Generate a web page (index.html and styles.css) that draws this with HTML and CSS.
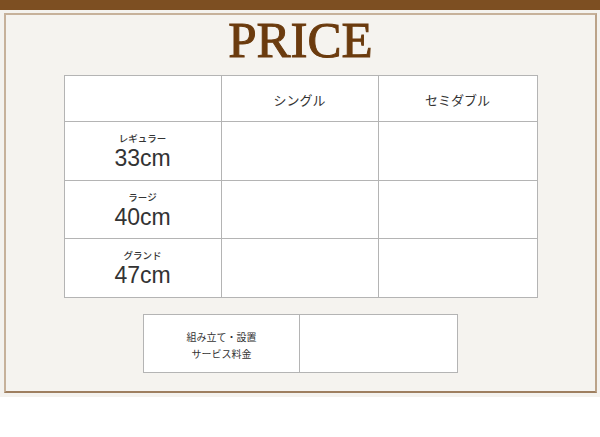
FILE: index.html
```html
<!DOCTYPE html>
<html lang="ja">
<head>
<meta charset="utf-8">
<title>PRICE</title>
<link rel="stylesheet" href="styles.css">
</head>
<body>
<div class="topbar"></div>
<div class="wrap">
  <section class="frame">
    <h1 class="title">PRICE</h1>
    <div class="grid price-grid">
      <div class="cell"></div>
      <div class="cell head">シングル</div>
      <div class="cell head">セミダブル</div>

      <div class="cell label"><span class="sub">レギュラー</span><span class="size">33cm</span></div>
      <div class="cell"></div>
      <div class="cell"></div>

      <div class="cell label"><span class="sub">ラージ</span><span class="size">40cm</span></div>
      <div class="cell"></div>
      <div class="cell"></div>

      <div class="cell label"><span class="sub">グランド</span><span class="size">47cm</span></div>
      <div class="cell"></div>
      <div class="cell"></div>
    </div>
    <div class="grid service-grid">
      <div class="cell service">組み立て・設置<br>サービス料金</div>
      <div class="cell"></div>
    </div>
  </section>
</div>
</body>
</html>
```

FILE: styles.css
```css
html, body {
  margin: 0;
  padding: 0;
  background: #ffffff;
}

body {
  width: 600px;
  font-family: "Noto Sans CJK JP", "Noto Sans", sans-serif;
  color: #333333;
}

.topbar {
  height: 10px;
  background: #7d4f22;
}

.wrap {
  background: #f4f2ee;
  padding: 3px 3px 4px 4px;
}

.frame {
  border: 2px solid #c6b19a;
  border-bottom-color: #9e7f60;
  border-right-color: #bba389;
  background: #f5f3ef;
  padding: 0 0 18px;
  display: flex;
  flex-direction: column;
  align-items: center;
}

.title {
  margin: 0;
  font-family: "Liberation Serif", "Times New Roman", serif;
  font-weight: normal;
  font-size: 51px;
  line-height: 50px;
  color: #6b3b0e;
  -webkit-text-stroke: 1px #6b3b0e;
}

.grid {
  display: grid;
  background: #b4b4b4;
  padding: 1px;
  gap: 1px;
}

.price-grid {
  margin-top: 10px;
  grid-template-columns: 156px 156px 158px;
  grid-template-rows: 45px 58px 57px 58px;
}

.service-grid {
  margin-top: 16px;
  grid-template-columns: 155px 157px;
  grid-template-rows: 57px;
}

.cell {
  background: #ffffff;
  display: flex;
  flex-direction: column;
  align-items: center;
  justify-content: center;
  text-align: center;
}

.head {
  font-size: 13px;
  line-height: 16px;
  padding-top: 3px;
  box-sizing: border-box;
}

.label {
  gap: 3px;
}

.sub {
  font-size: 9.5px;
  line-height: 12px;
  font-weight: 500;
}

.size {
  font-family: "Liberation Sans", Arial, sans-serif;
  font-size: 23px;
  line-height: 23px;
  color: #333333;
}

.service {
  font-size: 10px;
  line-height: 17px;
  padding-top: 2px;
  box-sizing: border-box;
}
```
